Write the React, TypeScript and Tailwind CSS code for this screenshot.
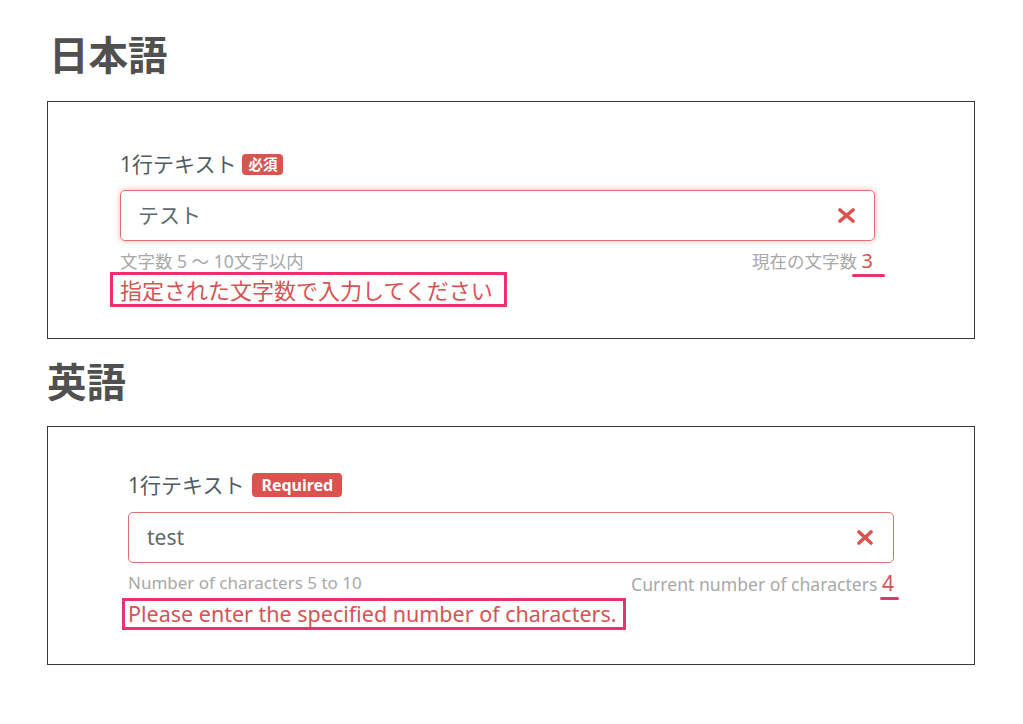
import React from "react";

function XIcon({ w, h }: { w: number; h: number }) {
  return (
    <svg width={w} height={h} viewBox={`0 0 ${w} ${h}`} className="shrink-0">
      <line x1={2} y1={2} x2={w - 2} y2={h - 2} stroke="#d9534f" strokeWidth={3.6} strokeLinecap="round" />
      <line x1={w - 2} y1={2} x2={2} y2={h - 2} stroke="#d9534f" strokeWidth={3.6} strokeLinecap="round" />
    </svg>
  );
}

export default function App() {
  return (
    <div className="min-h-[724px] w-[1023px] bg-white pl-[47px] pt-[33px] font-['Noto_Sans','Noto_Sans_CJK_JP',sans-serif]">
      <h1 className="ml-[2px] text-[39.5px] leading-[39px] font-bold text-[#505050] font-['Noto_Sans_CJK_JP',sans-serif]">日本語</h1>

      {/* Japanese box */}
      <div className="mt-[29px] w-[928px] h-[238px] border border-[#3a3a3a] pl-[72px] pr-[99px] pt-[50px]">
        <div className="flex items-center h-[24px] gap-[6px]">
          <span className="text-[21px] leading-none text-[#4e5b62]">1行テキスト</span>
          <span className="flex items-center h-[21px] px-[6px] rounded-[4px] bg-[#d9534f] text-white text-[14.5px] font-bold font-['Noto_Sans_CJK_JP',sans-serif]">必須</span>
        </div>
        <div className="mt-[14px] h-[51px] flex items-center pl-[17px] pr-[19px] border border-[#e07070] rounded-[5px] shadow-[0_0_6px_rgba(229,83,83,0.45)]">
          <span className="text-[21px] text-[#5b6b70]">テスト</span>
          <span className="ml-auto"><XIcon w={17} h={15} /></span>
        </div>
        <div className="mt-[9px] h-[22px] flex items-center justify-between text-[17.5px] leading-[22px] text-[#a8a8a8]">
          <span>文字数 5 〜 10文字以内</span>
          <span className="flex items-baseline">
            <span>現在の文字数&nbsp;</span>
            <span className="relative text-[20px] leading-[22px] text-[#d65353] mr-[2px]">
              3
              <span className="absolute left-[-10px] right-[-12px] bottom-[-5px] h-[3px] rounded-full bg-[#e8336f]"></span>
            </span>
          </span>
        </div>
        <div className="ml-[-10px] w-[397px] h-[35px] border-[3px] border-[#e8336f] pl-[7px] flex items-center text-[22px] text-[#d65353] leading-none whitespace-nowrap">
          指定された文字数で入力してください
        </div>
      </div>

      <h1 className="mt-[21px] text-[39.5px] leading-[39px] font-bold text-[#505050] font-['Noto_Sans_CJK_JP',sans-serif]">英語</h1>

      {/* English box */}
      <div className="mt-[27px] w-[928px] h-[239px] border border-[#3a3a3a] pl-[80px] pr-[80px] pt-[46px]">
        <div className="flex items-center h-[24px] gap-[8px]">
          <span className="text-[21px] leading-none text-[#4e5b62]">1行テキスト</span>
          <span className="flex items-center h-[24px] px-[9px] rounded-[4px] bg-[#d9534f] text-white text-[16px] font-bold">Required</span>
        </div>
        <div className="mt-[15px] h-[51px] flex items-center pl-[18px] pr-[20px] border border-[#e07070] rounded-[5px]">
          <span className="text-[21px] text-[#5b6b70]">test</span>
          <span className="ml-auto"><XIcon w={16} h={15} /></span>
        </div>
        <div className="mt-[9px] h-[22px] flex items-center justify-between leading-[22px] text-[#a8a8a8]">
          <span className="text-[17px]">Number of characters 5 to 10</span>
          <span className="flex items-baseline">
            <span className="text-[17.6px]">Current number of characters&nbsp;</span>
            <span className="relative text-[21px] leading-[22px] text-[#d65353]">
              4
              <span className="absolute left-[-2px] right-[-5px] bottom-[-6px] h-[3px] rounded-full bg-[#e8336f]"></span>
            </span>
          </span>
        </div>
        <div className="mt-[4px] ml-[-6px] w-[504px] h-[32px] border-[3px] border-[#e8336f] pl-[3px] flex items-center text-[21.5px] text-[#d65353] leading-none whitespace-nowrap">
          Please enter the specified number of characters.
        </div>
      </div>
    </div>
  );
}
